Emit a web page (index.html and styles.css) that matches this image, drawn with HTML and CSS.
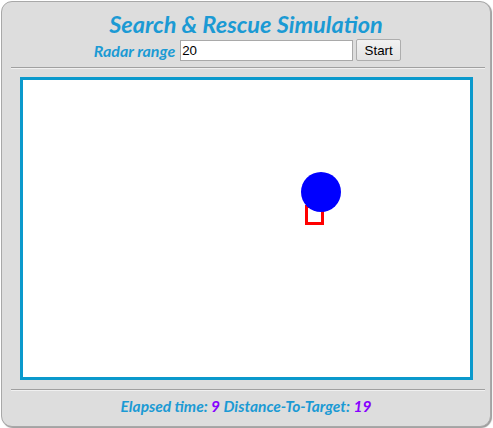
FILE: index.html
```html
<!DOCTYPE html>
<html>
<head>
<meta charset="utf-8">
<link rel="stylesheet" href="styles.css">
</head>
<body>
<div class="panel">
  <h1 class="title">Search &amp; Rescue Simulation</h1>
  <div class="controls">
    <label class="label" for="range">Radar range</label>
    <input id="range" class="range" type="text" value="20">
    <button class="start">Start</button>
  </div>
  <hr class="rule">
  <div class="stage">
    <svg class="canvas" width="447" height="297" viewBox="0 0 447 297">
      <rect x="283.5" y="126.5" width="16" height="17" fill="none" stroke="#ff0000" stroke-width="3"/>
      <circle cx="298" cy="112" r="20" fill="#0000ff"/>
    </svg>
  </div>
  <hr class="rule rule-bottom">
  <div class="status">Elapsed time: <span class="num">9</span> Distance-To-Target: <span class="num">19</span></div>
</div>
</body>
</html>
```
FILE: styles.css
```css
html, body {
  margin: 0;
  padding: 0;
  background: #ffffff;
}
.panel {
  box-sizing: border-box;
  margin: 1px;
  width: 490px;
  height: 426px;
  background: #dddddd;
  border: 1px solid #a8a8a8;
  border-radius: 11px;
  box-shadow: 1px 1px 1px #9a9a9a;
  padding: 8px 8px 0 8px;
  display: flex;
  flex-direction: column;
  align-items: stretch;
}
.title {
  margin: 0;
  height: 29px;
  text-align: center;
  font-family: Lato, "Open Sans", sans-serif;
  font-style: italic;
  font-weight: bold;
  font-size: 23.5px;
  line-height: 29px;
  color: #1b9ad4;
}
.controls {
  display: flex;
  justify-content: center;
  align-items: center;
  gap: 3px;
  height: 22px;
  margin-left: 3px;
}
.label {
  font-family: Lato, "Open Sans", sans-serif;
  font-style: italic;
  font-weight: bold;
  font-size: 16px;
  color: #1b9ad4;
  margin-right: 2px;
}
.range {
  box-sizing: border-box;
  width: 173px;
  height: 21px;
  border: 1px solid #a9a9a9;
  padding: 0 1px;
  font-family: "Liberation Sans", Arial, sans-serif;
  font-size: 13.33px;
  color: #000;
  background: #fff;
  margin: 0;
}
.start {
  box-sizing: border-box;
  width: 45px;
  height: 22px;
  margin: 0;
  border: 1px solid #adadad;
  border-radius: 2px;
  background: linear-gradient(#f2f2f2, #e3e3e3);
  font-family: "Liberation Sans", Arial, sans-serif;
  font-size: 13.33px;
  color: #000;
  padding: 0;
}
.rule {
  margin: 6px 0 0 1px;
  width: 474px;
  height: 0;
  border: none;
  border-top: 1px solid #a0a0a0;
  border-bottom: 1px solid #f0f0f0;
}
.stage {
  margin: 8px 0 0 10px;
  display: flex;
}
.canvas {
  display: block;
  background: #ffffff;
  border: 3px solid #0a99cc;
}
.rule-bottom {
  margin-top: 9px;
}
.status {
  margin-top: 6px;
  text-align: center;
  font-family: Lato, "Open Sans", sans-serif;
  font-style: italic;
  font-weight: bold;
  font-size: 15.5px;
  color: #1b9ad4;
}
.num {
  color: #8800ff;
}
```
